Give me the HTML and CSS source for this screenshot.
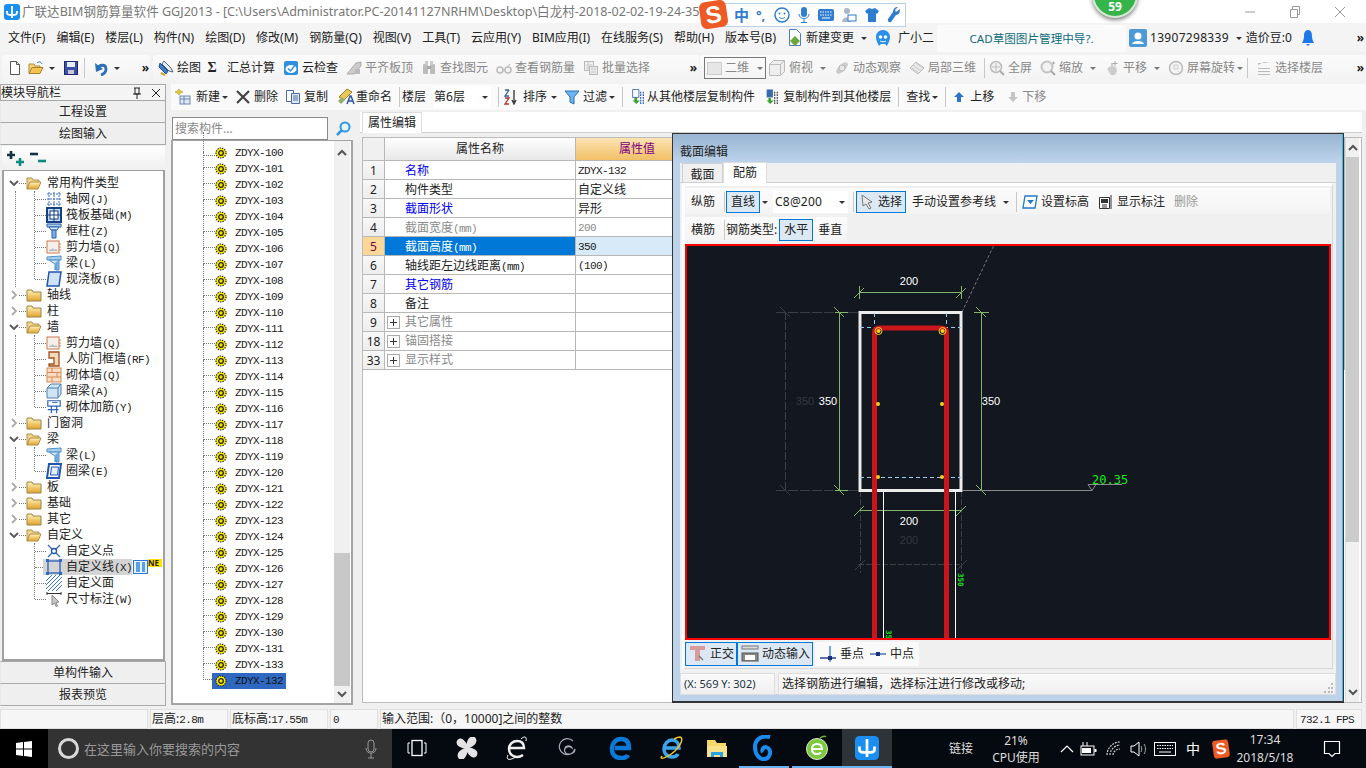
FILE: index.html
```html
<!DOCTYPE html>
<html lang="zh-CN">
<head>
<meta charset="utf-8">
<title>广联达BIM钢筋算量软件 GGJ2013</title>
<link rel="stylesheet" href="styles.css">
</head>
<body>
<svg class="sprite" xmlns="http://www.w3.org/2000/svg">
  <defs>
    <linearGradient id="gf" x1="0" y1="0" x2="0" y2="1"><stop offset="0" stop-color="#fff3b8"/><stop offset="1" stop-color="#e2a32c"/></linearGradient>
  </defs>
  <symbol id="new" viewBox="0 0 16 16"><path d="M3.5 1.5h6l3 3v10h-9z" fill="#fff" stroke="#555"/><path d="M9.5 1.5v3h3" fill="#ddd" stroke="#555"/></symbol>
  <symbol id="open" viewBox="0 0 16 16"><path d="M1 13V4h5l1 2h5v2" fill="#f5d67a" stroke="#b08a3a"/><path d="M1 13.5l3-6h11l-3 6z" fill="#f3c452" stroke="#a8802e"/><path d="M9 3c2-2 4-1 5 1" fill="none" stroke="#2a6fc0"/></symbol>
  <symbol id="save" viewBox="0 0 16 16"><rect x="1.5" y="1.5" width="13" height="13" fill="#3e4fa8" stroke="#1d2a70"/><rect x="4" y="2" width="8" height="5" fill="#e8eef8"/><rect x="5" y="10" width="6" height="4" fill="#c8c8d8"/></symbol>
  <symbol id="undo" viewBox="0 0 16 16"><path d="M5 9c1-5 8-5 8 0 0 3-2 5-5 6" fill="none" stroke="#2f6fb8" stroke-width="2.800"/><path d="M2 3l1 9 7-3z" fill="#2f6fb8"/></symbol>
  <symbol id="draw" viewBox="0 0 16 16"><path d="M2 3l8 8-2 3-7-7z" fill="#3a7fd0" stroke="#1f4f90"/><path d="M6 1l7 7 2 4-4-1-7-7z" fill="#e8eef6" stroke="#567"/><path d="M3 13l4 2" stroke="#d8a030" stroke-width="2"/></symbol>
  <symbol id="cloud" viewBox="0 0 16 16"><rect x="1" y="1" width="14" height="14" rx="2" fill="#2f8fe0"/><ellipse cx="8" cy="9" rx="5.500" ry="4" fill="#fff"/><path d="M5 8.500l2.500 2.500 4-5" fill="none" stroke="#2f8fe0" stroke-width="1.500"/></symbol>
  <symbol id="align" viewBox="0 0 16 16"><path d="M1 14l9-11 5-1v4L8 14z" fill="#ccc" stroke="#aaa"/><rect x="9" y="9" width="5" height="5" fill="#bbb"/></symbol>
  <symbol id="bino" viewBox="0 0 16 16"><rect x="2" y="4" width="5" height="10" rx="1" fill="#bbb"/><rect x="9" y="4" width="5" height="10" rx="1" fill="#bbb"/><rect x="4" y="1" width="3" height="4" fill="#ccc"/><rect x="9" y="1" width="3" height="4" fill="#ccc"/><rect x="6" y="6" width="4" height="3" fill="#aaa"/></symbol>
  <symbol id="view" viewBox="0 0 16 16"><circle cx="4" cy="10" r="3" fill="none" stroke="#bbb" stroke-width="1.500"/><circle cx="12" cy="10" r="3" fill="none" stroke="#bbb" stroke-width="1.500"/><path d="M7 10h2M12 7l2-3" stroke="#bbb"/></symbol>
  <symbol id="batch" viewBox="0 0 16 16"><rect x="1.500" y="1.500" width="9" height="9" fill="#eee" stroke="#bbb"/><path d="M3 5h6M3 8h6M5 2v8" stroke="#ccc"/><rect x="6.500" y="6.500" width="8" height="8" fill="#e8e8e8" stroke="#bbb"/><path d="M8 9h5M8 12h5" stroke="#ccc"/></symbol>
  <symbol id="cube" viewBox="0 0 18 18"><path d="M1.500 5.500l4-4h11v11l-4 4h-11z" fill="#eee" stroke="#bbb"/><path d="M1.500 5.500h11v11M12.500 5.500l4-4" fill="none" stroke="#bbb"/></symbol>
  <symbol id="orbit" viewBox="0 0 16 16"><ellipse cx="8" cy="8" rx="7.500" ry="3.500" transform="rotate(-45 8 8)" fill="#ccc"/><circle cx="8" cy="8" r="3" fill="#e8e8e8" stroke="#bbb"/></symbol>
  <symbol id="local" viewBox="0 0 16 16"><path d="M1 8l6-6 8 6-6 6z" fill="#e8e8e8" stroke="#bbb"/><path d="M4 5l8 6M7 3l7 5M3 8l7 5" stroke="#ccc"/></symbol>
  <symbol id="full" viewBox="0 0 16 16"><circle cx="7" cy="7" r="5.500" fill="#f2f2f2" stroke="#bbb" stroke-width="1.500"/><path d="M7 3v8M3 7h8" stroke="#bbb"/><path d="M11 11l4 4" stroke="#aaa" stroke-width="2"/></symbol>
  <symbol id="zoomi" viewBox="0 0 16 16"><circle cx="7" cy="7" r="5.500" fill="#f2f2f2" stroke="#c4c4c4" stroke-width="2"/><path d="M11 11l4 4" stroke="#aaa" stroke-width="2"/><path d="M12 3h3M13.500 1.500v3" stroke="#aaa"/></symbol>
  <symbol id="pan" viewBox="0 0 16 16"><path d="M3 9l3-3 1 1V3h2v3l3 1 1 4-2 4H7z" fill="#ccc"/><path d="M11 1v5M8.500 3.500h5" stroke="#aaa"/></symbol>
  <symbol id="rot" viewBox="0 0 16 16"><circle cx="8" cy="8" r="6.500" fill="#f4f4f4" stroke="#bbb" stroke-width="1.500"/><path d="M6 5h4v4H6zM10 11l3 3" stroke="#ccc" fill="none"/></symbol>
  <symbol id="floor" viewBox="0 0 16 16"><path d="M2 5l6-3 6 1H2zM2 8h12v1H2zM2 11h12v1H2zM2 14h12v1H2z" fill="#bbb"/></symbol>
  <symbol id="nw" viewBox="0 0 16 16"><rect x="5" y="7" width="10" height="8" fill="#dfe8f4" stroke="#6a88b0"/><path d="M5 10h10M9 7v8" stroke="#6a88b0"/><path d="M4 0c1 2 2 2 4 3-2 1-3 1-4 3-1-2-2-2-4-3 2-1 3-1 4-3z" fill="#e8c430" stroke="#a08010" stroke-width=".500"/></symbol>
  <symbol id="del" viewBox="0 0 16 16"><path d="M2 2l12 12M14 2L2 14" stroke="#444" stroke-width="2.200"/></symbol>
  <symbol id="copy" viewBox="0 0 16 16"><path d="M1.500 1.500h7v11h-7z" fill="#fff" stroke="#4a6c9c"/><path d="M6.500 4.500h8v10h-8z" fill="#dfe9f6" stroke="#4a6c9c"/><path d="M8 7h5M8 9h5M8 11h5" stroke="#4a6c9c"/></symbol>
  <symbol id="ren" viewBox="0 0 20 18"><path d="M4 9l8-8 5 3-8 8z" fill="#e9c75a" stroke="#a08020"/><path d="M3 13l4-4 3 3-4 4z" fill="#8cb070"/><path d="M12 16l3-8h1l3 8M13.500 13h4" fill="none" stroke="#2a55a8" stroke-width="1.500"/></symbol>
  <symbol id="sort" viewBox="0 0 16 16"><path d="M3 1h4M7 1L3 7h4" fill="none" stroke="#3360a8" stroke-width="1.300"/><path d="M3 9h4L3 15h4" fill="none" stroke="#b03030" stroke-width="1.300"/><path d="M12 1v12M10 11l2 4 2-4" fill="none" stroke="#333" stroke-width="1.300"/></symbol>
  <symbol id="filter" viewBox="0 0 16 16"><path d="M1 2h14l-5 6v7l-4-2V8z" fill="#6db4ee" stroke="#2a70b8"/></symbol>
  <symbol id="cpa" viewBox="0 0 16 18"><path d="M2 .5h7v9H2z" fill="#fff" stroke="#3a6bb0"/><path d="M11 3v14M14 3v14" stroke="#3a6bb0" stroke-dasharray="2 1" stroke-width="1.500"/><path d="M4 10h3v3h3l-4 4-4-4h2z" fill="#3aa030"/></symbol>
  <symbol id="cpb" viewBox="0 0 16 18"><path d="M2 .5h7v9H2z" fill="#3a6bb0"/><path d="M11 3v14M14 3v14" stroke="#555" stroke-dasharray="2 1" stroke-width="1.500"/><path d="M4 10h3v3h3l-4 4-4-4h2z" fill="#3aa030"/></symbol>
  <symbol id="up" viewBox="0 0 12 12"><path d="M6 1l5 5H8v5H4V6H1z" fill="#2f74c8"/></symbol>
  <symbol id="dn" viewBox="0 0 12 12"><path d="M6 11l5-5H8V1H4v5H1z" fill="#c4c4c4"/></symbol>
  <symbol id="fo" viewBox="0 0 16 14"><path d="M1 13V2h5l1 2h6v2" fill="#f0d488" stroke="#b09048"/><path d="M1 13l3-7h11l-3 7z" fill="url(#gf)" stroke="#b09048"/></symbol>
  <symbol id="fc" viewBox="0 0 16 14"><path d="M1 13V2h5l1 2h8v9z" fill="url(#gf)" stroke="#9a8448"/></symbol>
  <symbol id="grid" viewBox="0 0 16 16"><path d="M3 1v14M8 1v14M13 1v14M1 3h14M1 8h14M1 13h14" stroke="#3a68b8" stroke-dasharray="2 1"/></symbol>
  <symbol id="raft" viewBox="0 0 16 16"><rect x="1" y="1" width="14" height="14" fill="#c4dcf4" stroke="#173f80" stroke-width="2"/><rect x="4" y="4" width="8" height="8" fill="#fff" stroke="#173f80"/><path d="M8 1v14M1 8h14" stroke="#173f80"/></symbol>
  <symbol id="col" viewBox="0 0 16 16"><path d="M1 1h14v3H1z" fill="#a8cdf0" stroke="#2a5ea8"/><path d="M3 4h10l-2 3H5z" fill="#dcecfa" stroke="#2a5ea8"/><path d="M6 7h4v8H6z" fill="#7ab0e6" stroke="#2a5ea8"/></symbol>
  <symbol id="wall" viewBox="0 0 16 16"><rect x="1" y="2" width="12" height="12" fill="#f4f0ec" stroke="#d07a4a"/><path d="M4 10l1 1 2-2 1 2 2-1 2 2H3z" fill="#b8b8b8"/><path d="M13 5h2M13 8h2M13 11h2" stroke="#d07a4a"/></symbol>
  <symbol id="beam" viewBox="0 0 16 16"><path d="M1 2l14-1v4L1 5z" fill="#a8d0ee" stroke="#4e90c8"/><path d="M3 5h10L9 15V9z" fill="#d0e6f8" stroke="#4e90c8"/><path d="M10 7v8h3V5" fill="#7ab6e6" stroke="#4e90c8"/></symbol>
  <symbol id="slab" viewBox="0 0 16 16"><path d="M3 1h12l-2 14H1z" fill="#cfe2f8" stroke="#1f55b0" stroke-width="1.500"/></symbol>
  <symbol id="door" viewBox="0 0 16 16"><path d="M3 1h10v14H3v-2h5V7H3z" fill="#f4d8b8" stroke="#a05020" stroke-width="1.300"/></symbol>
  <symbol id="brick" viewBox="0 0 16 16"><rect x="1" y="1" width="14" height="14" fill="#f8dcc4" stroke="#d88850"/><path d="M1 5.500h14M1 10h14M6 1v4.500M11 5.500V10M6 10v5" stroke="#d88850"/></symbol>
  <symbol id="hide" viewBox="0 0 16 16"><path d="M1 5l4-4h10v10l-3 4H1z" fill="#cfe4f6" stroke="#4e7fb0"/><path d="M1 5h11v10M12 5l3-4" fill="none" stroke="#4e7fb0"/></symbol>
  <symbol id="reb" viewBox="0 0 18 16"><path d="M2 1h14v6H2zM6 7v8M12 7v8M2 11h12" fill="none" stroke="#2a62b8" stroke-width="1.300"/><path d="M7 3h6" stroke="#2a62b8"/></symbol>
  <symbol id="ring" viewBox="0 0 16 16"><path d="M3 1h12l-2 14H1z" fill="#fff" stroke="#1f55b0" stroke-width="2"/><path d="M5.500 4h7l-1 8h-7z" fill="#e4eefa" stroke="#1f55b0"/></symbol>
  <symbol id="cp" viewBox="0 0 16 16"><path d="M2 2l12 12M14 2L2 14" stroke="#3a68b8" stroke-width="1.300"/><circle cx="8" cy="8" r="2.500" fill="#fff" stroke="#1f55b0" stroke-width="1.300"/></symbol>
  <symbol id="cl" viewBox="0 0 16 16"><rect x="2" y="2" width="12" height="12" fill="none" stroke="#1f55b0" stroke-width="1.200"/><path d="M0 0h3v3H0zM13 0h3v3h-3zM0 13h3v3H0zM13 13h3v3h-3z" fill="#2a6ac8"/></symbol>
  <symbol id="cf" viewBox="0 0 16 16"><path d="M0 6L6 0M0 10L10 0M0 14L14 0M2 16L16 2M6 16L16 6M10 16l6-6" stroke="#3a78c8"/></symbol>
  <symbol id="dim" viewBox="0 0 16 16"><path d="M1 1v3M15 1v3M1 2.500h14" stroke="#333" fill="none"/><path d="M6 4l7 7-3 .5 1.500 3.500-1.500 .5-1.500-3.500L6 14z" fill="#c8c8c8" stroke="#888"/></symbol>
  <symbol id="gear" viewBox="0 0 12 12"><circle cx="6" cy="6" r="5" fill="#f6e600" stroke="#222" stroke-width="1.200" stroke-dasharray="1.300 1.100"/><circle cx="6" cy="6" r="2.300" fill="#f6e600" stroke="#222" stroke-width="1.300"/></symbol>
  <symbol id="chr" viewBox="0 0 10 10"><path d="M3 1l4 4-4 4" fill="none" stroke="#aaa" stroke-width="1.800"/></symbol>
  <symbol id="chd" viewBox="0 0 10 10"><path d="M1 3l4 4 4-4" fill="none" stroke="#555" stroke-width="1.800"/></symbol>
  <symbol id="sel" viewBox="0 0 16 16"><path d="M3 1l1 11 3-2 3 5 2-1-3-5 4-1z" fill="#e8e8e8" stroke="#777"/></symbol>
  <symbol id="lvl" viewBox="0 0 16 16"><path d="M3 2h12l-2 12H1z" fill="#fff" stroke="#1f78c8" stroke-width="1.300"/><path d="M5 6h7l-3.500 4z" fill="#1f78c8"/></symbol>
  <symbol id="show" viewBox="0 0 16 16"><path d="M1.500 3.500h10v11h-10z" fill="#fff" stroke="#333"/><path d="M3 5h7v4H3z" fill="#333"/><path d="M13 1v14" stroke="#333"/><path d="M4 11h5M4 13h5" stroke="#333"/></symbol>
  <symbol id="ortho" viewBox="0 0 18 18"><path d="M1 1h15v4H11v11H6V5H1z" fill="#d89a9a"/><path d="M10 11l4 4" stroke="#777" stroke-width="1.500"/></symbol>
  <symbol id="dyn" viewBox="0 0 18 18"><rect x="1" y="1" width="16" height="3" fill="#ddd" stroke="#777"/><rect x="1" y="8" width="16" height="8" fill="#888" stroke="#555"/><rect x="4" y="10" width="10" height="5" fill="#fff"/></symbol>
  <symbol id="per" viewBox="0 0 18 18"><path d="M11 1v16" stroke="#4a88d8" stroke-width="1.500"/><path d="M1 13h16" stroke="#26408e" stroke-width="1.500"/><rect x="9" y="11" width="4" height="4" fill="#1a2f80"/></symbol>
  <symbol id="mid" viewBox="0 0 18 18"><path d="M1 9h16" stroke="#4a70b8" stroke-width="1.500"/><rect x="7" y="7" width="4" height="4" fill="#1a2f80"/></symbol>
  <symbol id="usr" viewBox="0 0 18 18"><rect width="18" height="18" rx="2" fill="#4a9ad8"/><circle cx="9" cy="7" r="3.500" fill="#fff"/><path d="M3 15c1-4 11-4 12 0z" fill="#fff"/></symbol>
  <symbol id="bell" viewBox="0 0 14 18"><path d="M7 1c3 0 4 3 4 6s1 5 2 7H1c1-2 2-4 2-7s1-6 4-6z" fill="#1f78e8"/><path d="M5 15h4l-2 2z" fill="#1f78e8"/></symbol>
  <symbol id="doc" viewBox="0 0 16 18"><path d="M2.500 .5h7l4 4v12h-11z" fill="#fff" stroke="#4a7ec0"/><path d="M8 7l5 5-5 5-5-5z" fill="#6ca83a"/></symbol>
  <symbol id="xiao" viewBox="0 0 18 18"><path d="M9 1c4 0 7 3 7 7 0 4-2 6-3 9l-2-2H7l-2 2C4 14 2 12 2 8c0-4 3-7 7-7z" fill="#2a8fe8"/><circle cx="6.500" cy="8" r="1.800" fill="#fff"/><circle cx="11.500" cy="8" r="1.800" fill="#fff"/><path d="M6 12c2 1 4 1 6 0" stroke="#fff" fill="none"/></symbol>
  <symbol id="app" viewBox="0 0 16 16"><rect width="16" height="16" rx="3" fill="#1b8ef2"/><path d="M8 2v12M3 7v2c0 2 2 2 5 2s5 0 5-2V7" fill="none" stroke="#fff" stroke-width="1.800"/></symbol>
  <symbol id="mag" viewBox="0 0 16 16"><circle cx="10" cy="6" r="4.500" fill="#eaf4fc" stroke="#2e9ae6" stroke-width="2"/><path d="M6.500 9.500L2 14" stroke="#2e9ae6" stroke-width="2.500"/></symbol>
</svg>

<div class="app">
  <header class="titlebar">
    <svg class="ic16"><use href="#app"/></svg>
    <span class="title">广联达BIM钢筋算量软件 GGJ2013 - [C:\Users\Administrator.PC-20141127NRHM\Desktop\白龙村-2018-02-02-19-24-35</span>
    <div class="winctl">
      <svg width="14" height="14" viewBox="0 0 14 14"><path d="M2 7h10" stroke="#999"/></svg>
      <svg width="14" height="14" viewBox="0 0 14 14"><path d="M2.500 4.500h7v8h-7zM4.500 4.500v-3h7v8h-2" fill="none" stroke="#999"/></svg>
      <svg width="14" height="14" viewBox="0 0 14 14"><path d="M2 2l10 10M12 2L2 12" stroke="#999"/></svg>
    </div>
  </header>

  <nav class="menubar">
    <span>文件(F)</span><span>编辑(E)</span><span>楼层(L)</span><span>构件(N)</span><span>绘图(D)</span><span>修改(M)</span><span>钢筋量(Q)</span><span>视图(V)</span><span>工具(T)</span><span>云应用(Y)</span><span>BIM应用(I)</span><span>在线服务(S)</span><span>帮助(H)</span><span>版本号(B)</span>
    <span class="it"><svg class="ic16 h18"><use href="#doc"/></svg>新建变更<i class="caret c-wide"></i></span>
    <span class="it xiaoit"><svg class="ic18"><use href="#xiao"/></svg>广小二</span>
    <span class="cadbox">CAD草图图片管理中导?.</span>
    <span class="it user"><svg class="ic18"><use href="#usr"/></svg><span class="phone">13907298339</span><i class="caret c-wide"></i></span>
    <span class="it bean">造价豆:0<svg class="bellic"><use href="#bell"/></svg></span>
    <span class="more">»</span>
  </nav>

  <div class="toolbar">
    <div class="band b1">
      <svg class="ic16"><use href="#new"/></svg>
      <span class="it"><svg class="ic16"><use href="#open"/></svg><i class="caret c-mid"></i></span>
      <svg class="ic16 savemar"><use href="#save"/></svg>
      <i class="sep"></i>
      <span class="it undoit"><svg class="ic16"><use href="#undo"/></svg><i class="caret c-mid"></i></span>
      <span class="more pushr">»</span>
    </div>
    <div class="band b2">
      <span class="it"><svg class="ic16"><use href="#draw"/></svg>绘图</span>
      <span class="it"><b class="sigma">Σ</b>汇总计算</span>
      <span class="it"><svg class="ic16"><use href="#cloud"/></svg>云检查</span>
      <span class="it off"><svg class="ic16"><use href="#align"/></svg>平齐板顶</span>
      <span class="it off"><svg class="ic16"><use href="#bino"/></svg>查找图元</span>
      <span class="it off"><svg class="ic16"><use href="#view"/></svg>查看钢筋量</span>
      <span class="it off"><svg class="ic16"><use href="#batch"/></svg>批量选择</span>
      <span class="more pushr">»</span>
    </div>
    <div class="band b3 off">
      <span class="it twod"><i class="swatch"></i>二维<i class="caret"></i></span>
      <span class="it cubeit"><svg class="ic18"><use href="#cube"/></svg>俯视<i class="caret c-wide"></i></span>
      <span class="it"><svg class="ic16"><use href="#orbit"/></svg>动态观察</span>
      <span class="it"><svg class="ic16"><use href="#local"/></svg>局部三维</span>
      <i class="sep sepa"></i>
      <span class="it"><svg class="ic16"><use href="#full"/></svg>全屏</span>
      <span class="it"><svg class="ic16"><use href="#zoomi"/></svg>缩放<i class="caret c-wide"></i></span>
      <span class="it"><svg class="ic16"><use href="#pan"/></svg>平移<i class="caret c-wide"></i></span>
      <span class="it"><svg class="ic16"><use href="#rot"/></svg>屏幕旋转<i class="caret"></i></span>
      <i class="sep sepb"></i>
      <span class="it"><svg class="ic16"><use href="#floor"/></svg>选择楼层</span>
      <span class="more pushr dark">»</span>
    </div>
  </div>

  <div class="workspace">
    <aside class="nav">
      <div class="navhead"><span>模块导航栏</span><span class="navbtns"><svg width="10" height="12" viewBox="0 0 10 12"><path d="M2 1h6M3 1v6h4V1M1 7h8M5 7v5" fill="none" stroke="#222"/></svg><svg width="10" height="10" viewBox="0 0 10 10"><path d="M1 1l8 8M9 1L1 9" stroke="#222"/></svg></span></div>
      <div class="navbtn">工程设置</div>
      <div class="navbtn">绘图输入</div>
      <div class="treebar">
        <svg width="18" height="16" viewBox="0 0 18 16"><path d="M0 4h8M4 0v8" stroke="#134" stroke-width="2.600"/><path d="M9 11h8M13 7v8" stroke="#0a8a80" stroke-width="2.600"/></svg>
        <svg width="18" height="16" viewBox="0 0 18 16"><path d="M0 3h8" stroke="#134" stroke-width="2.600"/><path d="M8 10h8" stroke="#0a8a80" stroke-width="2.600"/></svg>
      </div>
      <div class="ntree">
        <div class="nr"><svg class="chev"><use href="#chd"/></svg><i class="dot"></i><svg class="fold"><use href="#fo"/></svg><span>常用构件类型</span></div>
        <div class="kids"><div class="kidsin">
          <div class="cr"><i class="dot2"></i><svg class="ic16"><use href="#grid"/></svg><span>轴网<em class="lat">(J)</em></span></div>
          <div class="cr"><i class="dot2"></i><svg class="ic16"><use href="#raft"/></svg><span>筏板基础<em class="lat">(M)</em></span></div>
          <div class="cr"><i class="dot2"></i><svg class="ic16"><use href="#col"/></svg><span>框柱<em class="lat">(Z)</em></span></div>
          <div class="cr"><i class="dot2"></i><svg class="ic16"><use href="#wall"/></svg><span>剪力墙<em class="lat">(Q)</em></span></div>
          <div class="cr"><i class="dot2"></i><svg class="ic16"><use href="#beam"/></svg><span>梁<em class="lat">(L)</em></span></div>
          <div class="cr"><i class="dot2"></i><svg class="ic16"><use href="#slab"/></svg><span>现浇板<em class="lat">(B)</em></span></div>
        </div></div>
        <div class="nr"><svg class="chev"><use href="#chr"/></svg><i class="dot"></i><svg class="fold"><use href="#fc"/></svg><span>轴线</span></div>
        <div class="nr"><svg class="chev"><use href="#chr"/></svg><i class="dot"></i><svg class="fold"><use href="#fc"/></svg><span>柱</span></div>
        <div class="nr"><svg class="chev"><use href="#chd"/></svg><i class="dot"></i><svg class="fold"><use href="#fo"/></svg><span>墙</span></div>
        <div class="kids"><div class="kidsin">
          <div class="cr"><i class="dot2"></i><svg class="ic16"><use href="#wall"/></svg><span>剪力墙<em class="lat">(Q)</em></span></div>
          <div class="cr"><i class="dot2"></i><svg class="ic16"><use href="#door"/></svg><span>人防门框墙<em class="lat">(RF)</em></span></div>
          <div class="cr"><i class="dot2"></i><svg class="ic16"><use href="#brick"/></svg><span>砌体墙<em class="lat">(Q)</em></span></div>
          <div class="cr"><i class="dot2"></i><svg class="ic16"><use href="#hide"/></svg><span>暗梁<em class="lat">(A)</em></span></div>
          <div class="cr"><i class="dot2"></i><svg class="ic16"><use href="#reb"/></svg><span>砌体加筋<em class="lat">(Y)</em></span></div>
        </div></div>
        <div class="nr"><svg class="chev"><use href="#chr"/></svg><i class="dot"></i><svg class="fold"><use href="#fc"/></svg><span>门窗洞</span></div>
        <div class="nr"><svg class="chev"><use href="#chd"/></svg><i class="dot"></i><svg class="fold"><use href="#fo"/></svg><span>梁</span></div>
        <div class="kids"><div class="kidsin">
          <div class="cr"><i class="dot2"></i><svg class="ic16"><use href="#beam"/></svg><span>梁<em class="lat">(L)</em></span></div>
          <div class="cr"><i class="dot2"></i><svg class="ic16"><use href="#ring"/></svg><span>圈梁<em class="lat">(E)</em></span></div>
        </div></div>
        <div class="nr"><svg class="chev"><use href="#chr"/></svg><i class="dot"></i><svg class="fold"><use href="#fc"/></svg><span>板</span></div>
        <div class="nr"><svg class="chev"><use href="#chr"/></svg><i class="dot"></i><svg class="fold"><use href="#fc"/></svg><span>基础</span></div>
        <div class="nr"><svg class="chev"><use href="#chr"/></svg><i class="dot"></i><svg class="fold"><use href="#fc"/></svg><span>其它</span></div>
        <div class="nr"><svg class="chev"><use href="#chd"/></svg><i class="dot"></i><svg class="fold"><use href="#fo"/></svg><span>自定义</span></div>
        <div class="kids nov"><div class="kidsin">
          <div class="cr"><i class="dot2"></i><svg class="ic16"><use href="#cp"/></svg><span>自定义点</span></div>
          <div class="cr"><i class="dot2 short"></i><span class="selwrap"><svg class="ic16"><use href="#cl"/></svg><span>自定义线<em class="lat">(X)</em></span></span><span class="tag"><i></i><i></i></span><b class="ne">NE</b></div>
          <div class="cr"><i class="dot2"></i><svg class="ic16"><use href="#cf"/></svg><span>自定义面</span></div>
          <div class="cr"><i class="dot2"></i><svg class="ic16"><use href="#dim"/></svg><span>尺寸标注<em class="lat">(W)</em></span></div>
        </div></div>
      </div>
      <div class="navbtn gapt">单构件输入</div>
      <div class="navbtn">报表预览</div>
    </aside>

    <div class="rest">
      <div class="toolbar2">
        <span class="it wide firstit"><svg class="ic16"><use href="#nw"/></svg>新建<i class="caret"></i></span>
        <span class="it"><svg class="ic16"><use href="#del"/></svg>删除</span>
        <span class="it"><svg class="ic16"><use href="#copy"/></svg>复制</span>
        <span class="it tight"><svg class="ic20"><use href="#ren"/></svg>重命名</span>
        <i class="sep sep5"></i>
        <span>楼层</span>
        <span class="floorcb">第6层<i class="caret"></i></span>
        <i class="sep sepa"></i>
        <span class="it wide"><svg class="ic16"><use href="#sort"/></svg>排序<i class="caret"></i></span>
        <span class="it"><svg class="ic16"><use href="#filter"/></svg>过滤<i class="caret"></i></span>
        <i class="sep"></i>
        <span class="it tight"><svg class="ic16"><use href="#cpa"/></svg>从其他楼层复制构件</span>
        <span class="it cpb"><svg class="ic16"><use href="#cpb"/></svg>复制构件到其他楼层</span>
        <i class="sep"></i>
        <span class="it">查找<i class="caret"></i></span>
        <i class="sep"></i>
        <span class="it wide"><svg class="ic12"><use href="#up"/></svg>上移</span>
        <span class="it off dnit"><svg class="ic12"><use href="#dn"/></svg>下移</span>
      </div>
      <div class="lower">
        <section class="comp">
          <div class="searchrow">
            <div class="searchbox">搜索构件...</div>
            <svg class="ic16"><use href="#mag"/></svg>
          </div>
          <div class="clist">
            <div class="rows">
              <div class="zr"><i class="dot3"></i><svg class="ic12"><use href="#gear"/></svg><span class="zt">ZDYX-100</span></div>
              <div class="zr"><i class="dot3"></i><svg class="ic12"><use href="#gear"/></svg><span class="zt">ZDYX-101</span></div>
              <div class="zr"><i class="dot3"></i><svg class="ic12"><use href="#gear"/></svg><span class="zt">ZDYX-102</span></div>
              <div class="zr"><i class="dot3"></i><svg class="ic12"><use href="#gear"/></svg><span class="zt">ZDYX-103</span></div>
              <div class="zr"><i class="dot3"></i><svg class="ic12"><use href="#gear"/></svg><span class="zt">ZDYX-104</span></div>
              <div class="zr"><i class="dot3"></i><svg class="ic12"><use href="#gear"/></svg><span class="zt">ZDYX-105</span></div>
              <div class="zr"><i class="dot3"></i><svg class="ic12"><use href="#gear"/></svg><span class="zt">ZDYX-106</span></div>
              <div class="zr"><i class="dot3"></i><svg class="ic12"><use href="#gear"/></svg><span class="zt">ZDYX-107</span></div>
              <div class="zr"><i class="dot3"></i><svg class="ic12"><use href="#gear"/></svg><span class="zt">ZDYX-108</span></div>
              <div class="zr"><i class="dot3"></i><svg class="ic12"><use href="#gear"/></svg><span class="zt">ZDYX-109</span></div>
              <div class="zr"><i class="dot3"></i><svg class="ic12"><use href="#gear"/></svg><span class="zt">ZDYX-110</span></div>
              <div class="zr"><i class="dot3"></i><svg class="ic12"><use href="#gear"/></svg><span class="zt">ZDYX-111</span></div>
              <div class="zr"><i class="dot3"></i><svg class="ic12"><use href="#gear"/></svg><span class="zt">ZDYX-112</span></div>
              <div class="zr"><i class="dot3"></i><svg class="ic12"><use href="#gear"/></svg><span class="zt">ZDYX-113</span></div>
              <div class="zr"><i class="dot3"></i><svg class="ic12"><use href="#gear"/></svg><span class="zt">ZDYX-114</span></div>
              <div class="zr"><i class="dot3"></i><svg class="ic12"><use href="#gear"/></svg><span class="zt">ZDYX-115</span></div>
              <div class="zr"><i class="dot3"></i><svg class="ic12"><use href="#gear"/></svg><span class="zt">ZDYX-116</span></div>
              <div class="zr"><i class="dot3"></i><svg class="ic12"><use href="#gear"/></svg><span class="zt">ZDYX-117</span></div>
              <div class="zr"><i class="dot3"></i><svg class="ic12"><use href="#gear"/></svg><span class="zt">ZDYX-118</span></div>
              <div class="zr"><i class="dot3"></i><svg class="ic12"><use href="#gear"/></svg><span class="zt">ZDYX-119</span></div>
              <div class="zr"><i class="dot3"></i><svg class="ic12"><use href="#gear"/></svg><span class="zt">ZDYX-120</span></div>
              <div class="zr"><i class="dot3"></i><svg class="ic12"><use href="#gear"/></svg><span class="zt">ZDYX-121</span></div>
              <div class="zr"><i class="dot3"></i><svg class="ic12"><use href="#gear"/></svg><span class="zt">ZDYX-122</span></div>
              <div class="zr"><i class="dot3"></i><svg class="ic12"><use href="#gear"/></svg><span class="zt">ZDYX-123</span></div>
              <div class="zr"><i class="dot3"></i><svg class="ic12"><use href="#gear"/></svg><span class="zt">ZDYX-124</span></div>
              <div class="zr"><i class="dot3"></i><svg class="ic12"><use href="#gear"/></svg><span class="zt">ZDYX-125</span></div>
              <div class="zr"><i class="dot3"></i><svg class="ic12"><use href="#gear"/></svg><span class="zt">ZDYX-126</span></div>
              <div class="zr"><i class="dot3"></i><svg class="ic12"><use href="#gear"/></svg><span class="zt">ZDYX-127</span></div>
              <div class="zr"><i class="dot3"></i><svg class="ic12"><use href="#gear"/></svg><span class="zt">ZDYX-128</span></div>
              <div class="zr"><i class="dot3"></i><svg class="ic12"><use href="#gear"/></svg><span class="zt">ZDYX-129</span></div>
              <div class="zr"><i class="dot3"></i><svg class="ic12"><use href="#gear"/></svg><span class="zt">ZDYX-130</span></div>
              <div class="zr"><i class="dot3"></i><svg class="ic12"><use href="#gear"/></svg><span class="zt">ZDYX-131</span></div>
              <div class="zr"><i class="dot3"></i><svg class="ic12"><use href="#gear"/></svg><span class="zt">ZDYX-133</span></div>
              <div class="zr cur"><i class="dot3 short last"></i><span class="curbox"><svg class="ic12"><use href="#gear"/></svg><span class="zt">ZDYX-132</span></span></div>
            </div>
            <div class="sbar">
              <svg class="sarrow" viewBox="0 0 10 10"><path d="M1 7l4-4 4 4" fill="none" stroke="#555" stroke-width="2"/></svg>
              <div class="sthumb"></div>
              <svg class="sarrow" viewBox="0 0 10 10"><path d="M1 3l4 4 4-4" fill="none" stroke="#555" stroke-width="2"/></svg>
            </div>
          </div>
        </section>

        <section class="propwrap">
          <div class="tabs"><span class="tab">属性编辑</span></div>
          <div class="proppanel">
            <div class="pgrid">
              <div class="h corner"></div><div class="h">属性名称</div><div class="h hv">属性值</div>
              <div class="n">1</div><div class="nm blue">名称</div><div class="v mono">ZDYX-132</div>
              <div class="n">2</div><div class="nm">构件类型</div><div class="v">自定义线</div>
              <div class="n">3</div><div class="nm blue">截面形状</div><div class="v">异形</div>
              <div class="n">4</div><div class="nm gray">截面宽度<em class="lat">(mm)</em></div><div class="v gray mono">200</div>
              <div class="n nsel">5</div><div class="nm msel">截面高度<em class="lat">(mm)</em></div><div class="v vsel mono">350</div>
              <div class="n">6</div><div class="nm">轴线距左边线距离<em class="lat">(mm)</em></div><div class="v mono">(100)</div>
              <div class="n">7</div><div class="nm blue">其它钢筋</div><div class="v"></div>
              <div class="n">8</div><div class="nm">备注</div><div class="v"></div>
              <div class="n">9</div><div class="nm gray grp"><i class="pm"></i>其它属性</div><div class="v"></div>
              <div class="n">18</div><div class="nm gray grp"><i class="pm"></i>锚固搭接</div><div class="v"></div>
              <div class="n">33</div><div class="nm gray grp"><i class="pm"></i>显示样式</div><div class="v"></div>
            </div>
            <div class="psbar">
              <svg class="sarrow" viewBox="0 0 10 10"><path d="M1 7l4-4 4 4" fill="none" stroke="#555" stroke-width="2"/></svg>
              <div class="pthumb"></div>
              <svg class="sarrow" viewBox="0 0 10 10"><path d="M1 3l4 4 4-4" fill="none" stroke="#555" stroke-width="2"/></svg>
            </div>
          </div>
        </section>
      </div>
    </div>
  </div>

  <footer class="status">
    <span class="s0"></span><span class="s1">层高:<em>2.8m</em></span><span class="s2">底标高:<em>17.55m</em></span><span class="s3"><em>0</em></span><span class="s4">输入范围:（0，10000]之间的整数</span><span class="s5"><em>732.1 FPS</em></span>
  </footer>

  <div class="taskbar">
    <div class="start"><svg width="18" height="18" viewBox="0 0 18 18"><path d="M1 3l7-1v6.500H1zM9 2l8-1v7.500H9zM1 9.500h7V16l-7-1zM9 9.500h8V17l-8-1z" fill="#fff"/></svg></div>
    <div class="search"><i class="cortana"></i><span>在这里输入你要搜索的内容</span><svg class="mic" width="14" height="20" viewBox="0 0 14 20"><rect x="4" y="1" width="6" height="12" rx="3" fill="none" stroke="#999"/><path d="M2 9c0 7 10 7 10 0M7 15v4M4 19h6" fill="none" stroke="#999"/></svg></div>
    <div class="slot"><svg width="20" height="18" viewBox="0 0 20 18"><rect x="5" y="1.500" width="10" height="15" fill="none" stroke="#fff" stroke-width="1.300"/><path d="M3 4H1v10h2M17 4h2v10h-2" fill="none" stroke="#fff"/></svg></div>
    <div class="slot"><svg width="22" height="22" viewBox="0 0 22 22"><path d="M11 10C9 4 4 0 2 4s3 6 9 7c-5 2-10 5-8 9s7 1 8-8c2 6 7 10 9 6s-3-6-9-7c5-2 10-5 8-9s-7-1-8 8z" fill="#e4e4e4" stroke="#e4e4e4" stroke-width="2"/></svg></div>
    <div class="slot"><svg width="24" height="26" viewBox="0 0 24 26"><path d="M5 13h14c0-5-3-7-7-7s-8 3-8 8 4 8 8 8c2 0 4-.5 6-2" fill="none" stroke="#eee" stroke-width="2.500"/><path d="M3 20C0 26 6 25 11 22M16 4c3-3 6-3 5 2" fill="none" stroke="#fff"/></svg></div>
    <div class="slot"><svg width="20" height="20" viewBox="0 0 20 20"><path d="M16 3a8 8 0 1 0 2 8c0 5-8 7-10 3s3-7 7-4c-1-3-6-3-7 0" fill="none" stroke="#aab" stroke-width="1.200"/></svg></div>
    <div class="slot shift5"><svg width="24" height="24" viewBox="0 0 24 24"><path d="M6 12h14c0-6-3-9-8-9S3 7 3 13s4 9 9 9c3 0 6-1 7-3" fill="none" stroke="#0c78d8" stroke-width="4.500"/></svg></div>
    <div class="slot shift5"><svg width="26" height="26" viewBox="0 0 26 26"><path d="M7 13h14c0-5-3-8-7-8s-8 4-8 9 4 8 8 8c2 0 5-1 6-3" fill="none" stroke="#3aa6f0" stroke-width="3.500"/><path d="M4 21C0 26 11 22 17 16S26 3 22 2c-2 0-4 1-6 2" fill="none" stroke="#f0c020" stroke-width="1.500"/></svg></div>
    <div class="slot"><svg width="22" height="22" viewBox="0 0 22 22"><path d="M1 3h8l2 3h9v4H1z" fill="#f6d86a"/><path d="M1 9h20v11H1z" fill="#f9e28c"/><path d="M5 20v-5h12v5h-3v-2H8v2z" fill="#2fa2e6"/></svg></div>
    <div class="slot under"><svg width="24" height="26" viewBox="0 0 24 26"><path d="M18 2C10 0 3 4 3 12s5 13 10 12 7-8 3-11-7 2-5 4" fill="none" stroke="#1a8cf0" stroke-width="4"/></svg></div>
    <div class="slot under2"><svg width="26" height="26" viewBox="0 0 26 26"><circle cx="13" cy="14" r="10.500" fill="#7cc83e" stroke="#dfe8d0"/><path d="M8 14h10c0-3-2-5-5-5s-5 2-5 5 2 5 5 5c2 0 3-.5 4-1.500" fill="none" stroke="#fff" stroke-width="2"/><path d="M16 3c3-2 5-2 6-1" fill="none" stroke="#6ca83a" stroke-width="1.500"/></svg></div>
    <div class="slot active"><svg width="24" height="24"><use href="#app"/></svg></div>
    <div class="tray">
      <span class="t-link">链接</span>
      <span class="t-cpu"><b>21%</b><b>CPU使用</b></span>
      <span class="t-a w16"><svg width="14" height="8" viewBox="0 0 14 8"><path d="M1 7l6-6 6 6" fill="none" stroke="#fff" stroke-width="1.200"/></svg></span>
      <span class="t-a w26"><svg width="18" height="16" viewBox="0 0 18 16"><rect x="2" y="5" width="13" height="9" fill="none" stroke="#fff"/><rect x="3" y="7" width="9" height="5" fill="#fff"/><path d="M4 1v4M8 1v4" stroke="#fff"/><rect x="15.500" y="8" width="2" height="3" fill="#fff"/></svg></span>
      <span class="t-a w26"><svg width="16" height="16" viewBox="0 0 16 16"><path d="M1 14C1 7 7 1 14 1M4 14C4 9 9 4 14 4M7 14c0-3 3-6 7-6" fill="none" stroke="#ccc" stroke-dasharray="2 1" stroke-width="1.200"/></svg></span>
      <span class="t-a w24"><svg width="18" height="16" viewBox="0 0 18 16"><path d="M1 5h3l5-4v14l-5-4H1z" fill="none" stroke="#fff"/><path d="M11 5c1 2 1 4 0 6M14 3c2 3 2 7 0 10" fill="none" stroke="#aaa"/></svg></span>
      <span class="t-a w28"><svg width="22" height="14" viewBox="0 0 22 14"><rect x=".5" y=".5" width="21" height="13" fill="none" stroke="#fff"/><path d="M3 3.500h16M3 6.500h16" stroke="#fff" stroke-dasharray="1.500 1"/><path d="M5 10h12" stroke="#fff"/></svg></span>
      <span class="t-a w28 zh">中</span>
      <span class="t-a w28"><b class="sg small">S</b></span>
      <span class="t-clock"><b>17:34</b><b>2018/5/18</b></span>
      <span class="t-a notif"><svg width="18" height="18" viewBox="0 0 18 18"><path d="M1.500 1.500h15v12H12l-3 3-3-3H1.500z" fill="none" stroke="#fff" stroke-width="1.200"/></svg></span>
    </div>
  </div>
</div>

<!-- overlays -->
<div class="sogou">
  <b class="sg">S</b>
  <div class="sgbar">
    <span class="sgzh">中</span>
    <span class="sgp">°,</span>
    <svg width="16" height="16" viewBox="0 0 16 16"><circle cx="8" cy="8" r="7" fill="#fff" stroke="#2f7dd0" stroke-width="1.500"/><circle cx="5.500" cy="6.500" r="1" fill="#2f7dd0"/><circle cx="10.500" cy="6.500" r="1" fill="#2f7dd0"/><path d="M5 10c2 2 4 2 6 0" stroke="#2f7dd0" fill="none"/></svg>
    <svg width="14" height="16" viewBox="0 0 14 16"><rect x="4" y="0" width="6" height="10" rx="3" fill="#2f7dd0"/><path d="M2 7c0 6 10 6 10 0M7 12v3M4 15.500h6" fill="none" stroke="#2f7dd0"/></svg>
    <svg width="16" height="14" viewBox="0 0 16 14"><rect x="0" y="1" width="16" height="12" rx="2" fill="#2f7dd0"/><path d="M2 4h12M2 7h12" stroke="#fff" stroke-dasharray="1.500 1"/><path d="M4 10h8" stroke="#fff"/></svg>
    <svg width="16" height="16" viewBox="0 0 16 16"><circle cx="6" cy="4" r="3" fill="#aab8c8"/><path d="M1 15c0-6 9-6 9 0z" fill="#aab8c8"/><rect x="7" y="8" width="8" height="6" fill="#fff" stroke="#2f7dd0"/></svg>
    <svg width="16" height="16" viewBox="0 0 16 16"><path d="M5 1l3 1 3-1 4 3-2 3-1-1v9H4V6L3 7 1 4z" fill="#2f7dd0"/></svg>
    <svg width="14" height="16" viewBox="0 0 14 16"><path d="M13 2L9 5 8 3l3-3C8 0 6 2 6 5L1 12c-1 2 1 4 3 3l5-7c3 0 4-3 4-6z" fill="#2f7dd0"/></svg>
  </div>
</div>
<div class="badge">59</div>

<div class="dialog">
  <div class="dtitle">截面编辑</div>
  <div class="dbody">
    <div class="dtabs"><span class="dt off2">截面</span><span class="dt on">配筋</span></div>
    <div class="dpanel">
      <div class="dbar1">
        <span>纵筋</span><i class="sep s-a"></i>
        <span class="tog">直线</span><i class="caret"></i>
        <span class="dcb">C8@200<i class="caret"></i></span>
        <i class="sep s-b"></i>
        <span class="tog it selbtn"><svg class="ic16"><use href="#sel"/></svg>选择</span>
        <span class="it m3">手动设置参考线<i class="caret c-wide"></i></span>
        <i class="sep s-c"></i>
        <span class="it"><svg class="ic16"><use href="#lvl"/></svg>设置标高</span>
        <span class="it m6"><svg class="ic16"><use href="#show"/></svg>显示标注</span>
        <span class="dis">删除</span>
      </div>
      <div class="dbar2">
        <span>横筋</span><i class="sep"></i><span>钢筋类型:</span><span class="tog">水平</span><span class="m3">垂直</span>
      </div>
      <div class="canvas">
        <svg class="cad" viewBox="687 246 642 392" xmlns="http://www.w3.org/2000/svg">
          <g stroke="#3a3e46" stroke-width="1" fill="none">
            <path d="M776 312.500H858M776 490.500H858" stroke-dasharray="10 2"/>
            <path d="M785.500 312V491" stroke-dasharray="8 2"/>
            <path d="M780 307l10 10M780 485l10 10"/>
            <path d="M860.500 491V573M961.500 491V573M858 564.500H963" stroke-dasharray="6 2"/>
            <path d="M855 570l10-10M957 570l10-10"/>
          </g>
          <path d="M962 312L994 245" stroke="#777" stroke-dasharray="3 2" fill="none"/>
          <text x="805" y="405" class="dimt">350</text>
          <text x="909" y="544" class="dimt">200</text>
          <g stroke="#82b46a" stroke-width="1" fill="none">
            <path d="M859 292.500H962M859.500 286V299M961.500 286V299M854 298l10-10M956 298l10-10"/>
            <path d="M839.500 312V490.500M835 312.500h13M835 490.500h13M834 307l10 10M834 485l10 10"/>
            <path d="M981.500 312V490.500M974 312.500h15M974 490.500h2M976 307l10 10M976 485l10 10"/>
            <path d="M860 510.500H961M854 516l10-10M956 516l10-10"/>
          </g>
          <text x="909" y="285" class="whitet">200</text>
          <text x="828" y="405" class="whitet">350</text>
          <text x="991" y="405" class="whitet">350</text>
          <text x="909" y="525" class="whitet">200</text>
          <path d="M883.500 491V639M955.500 491V639" stroke="#fff" fill="none"/>
          <rect x="860" y="312.500" width="101" height="178" fill="none" stroke="#ececec" stroke-width="3"/>
          <path d="M860 327.500H961M860 477.500H961M874.500 313V327M946.500 313V327" stroke="#9fcaf0" stroke-dasharray="4 3" fill="none"/>
          <path d="M874.500 639V333q0-5 5-5H941q5.500 0 5.500 5V639" fill="none" stroke="#c8161c" stroke-width="5"/>
          <path d="M962 490.500H1092M1088 484.500h34" stroke="#8a8a8a" fill="none"/>
          <path d="M1088 484.500h8l-4 6z" stroke="#8a8a8a" fill="none"/>
          <text x="1092" y="484" class="grn">20.35</text>
          <g fill="#f4d020">
            <circle cx="878.500" cy="331" r="2"/><circle cx="942.500" cy="331" r="2"/>
            <circle cx="878" cy="404" r="2"/><circle cx="942" cy="404" r="2"/>
            <circle cx="878" cy="477" r="2"/><circle cx="942" cy="477" r="2"/>
          </g>
          <g fill="none" stroke="#f4d020"><circle cx="878.500" cy="331" r="3.500"/><circle cx="942.500" cy="331" r="3.500"/></g>
          <text transform="translate(957.500 573) rotate(90)" class="grs">350</text>
          <text transform="translate(885.500 630) rotate(90)" class="grs">35</text>
        </svg>
      </div>
      <div class="dbar3">
        <span class="tog2 it"><svg class="ic18"><use href="#ortho"/></svg>正交</span>
        <span class="tog2 it"><svg class="ic18"><use href="#dyn"/></svg>动态输入</span>
        <span class="snap">
          <span class="it"><svg class="ic18"><use href="#per"/></svg>垂点</span>
          <span class="it"><svg class="ic18"><use href="#mid"/></svg>中点</span>
        </span>
      </div>
    </div>
    <div class="dstatus">
      <span class="ds1">(X: 569 Y: 302)</span>
      <span class="ds2">选择钢筋进行编辑，选择标注进行修改或移动;</span>
      <svg class="grip" width="10" height="10" viewBox="0 0 10 10"><path d="M7 0h2v2H7zM4 4h2v2H4zM7 4h2v2H7zM0 8h2v2H0zM4 8h2v2H4zM7 8h2v2H7z" fill="#bbb"/></svg>
    </div>
  </div>
</div>
</body>
</html>
```
FILE: styles.css
```css
* { box-sizing: border-box; }
html, body { margin: 0; padding: 0; }
body {
  width: 1366px; height: 768px; overflow: hidden; position: relative;
  font-family: "Noto Sans", "Noto Sans CJK SC", sans-serif;
  font-size: 12px; line-height: 16px; color: #222; background: #f0f0f0;
}
.sprite { display: block; width: 0; height: 0; }
i, em, b { font-style: normal; font-weight: normal; }
svg { flex: none; display: block; }
.ic12 { width: 12px; height: 12px; }
.ic16 { width: 16px; height: 16px; }
.ic18 { width: 18px; height: 18px; }
.ic20 { width: 20px; height: 18px; }
.h18 { height: 18px; }
.it { display: inline-flex; align-items: center; gap: 3px; white-space: nowrap; }
.off { color: #888; }
.sep { display: block; width: 1px; height: 20px; background: #c8c8c8; flex: none; }
.sepa { margin-right: -4px; }
.sepb { margin-left: -4px; }
.sep5 { margin-right: -5px; }
.caret { display: block; width: 0; height: 0; border: 3px solid transparent; border-top: 3px solid #333; border-bottom: 0; margin: 1px 0 0 -1px; flex: none; }
.off .caret { border-top-color: #777; }
.c-wide { margin-left: 4px; }
.c-mid { margin-left: 2px; }
.more { font-size: 12px; color: #222; font-weight: bold; }
.pushr { margin-left: auto; }
.lat { font-family: "Liberation Mono", monospace; font-size: 11px; letter-spacing: -.6px; }

.app { display: flex; flex-direction: column; height: 768px; }

/* title */
.titlebar { height: 23px; background: #fff; display: flex; align-items: center; padding-left: 4px; gap: 2px; flex: none; }
.title { color: #777; font-size: 12.55px; white-space: nowrap; width: 680px; overflow: hidden; }
.winctl { margin-left: auto; display: flex; gap: 31px; padding-right: 19px; }

/* menu */
.menubar { height: 29px; background: #f4f4f4; display: flex; align-items: center; padding-left: 8px; gap: 11px; flex: none; white-space: nowrap; }
.xiaoit { gap: 6px; margin-left: -4px; }
.cadbox { width: 189px; height: 27px; align-self: flex-end; background: #fafafa; color: #0e6c7c; text-align: center; line-height: 27px; border-radius: 3px 3px 0 0; font-size: 11.6px; margin-left: -8px; }
.user { margin-left: -8px; }
.phone { letter-spacing: .3px; }
.bean { margin-left: -7px; }
.bellic { width: 14px; height: 18px; margin-left: 6px; }
.menubar .more { margin-left: auto; padding-right: 2px; }

/* toolbar */
.toolbar { height: 32px; background: #f2f2f2; display: flex; padding: 3px 0; gap: 3px; flex: none; }
.band { background: linear-gradient(#fbfbfb, #f3f3f3); height: 26px; display: flex; align-items: center; border-radius: 3px; }
.b1 { width: 148px; padding: 0 1px 0 5px; gap: 5px; margin-left: 2px; flex: none; }
.savemar { margin-left: 3px; }
.undoit { margin-left: 3px; }
.b2 { width: 546px; padding: 0 2px 0 5px; gap: 8px; flex: none; }
.sigma { display: block; width: 12px; margin: 0 6px 0 -3px; text-align: center; font: bold 14px/16px "Liberation Serif", serif; color: #222; }
.b3 { flex: 1; padding: 0 2px 0 8px; gap: 8px; margin-left: -2px; min-width: 0; }
.cubeit { margin-left: -6px; }
.dark { color: #222; }
.twod { width: 62px; height: 22px; border: 1px solid #777; padding-left: 2px; margin-left: -4px; }
.twod .caret { margin-left: 5px; }
.swatch { display: block; width: 15px; height: 13px; background: #e6e6e6; border: 1px solid #ccc; }

/* workspace */
.workspace { height: 624px; display: flex; flex: none; }
.nav { width: 166px; display: flex; flex-direction: column; background: #f0f0f0; flex: none; padding-bottom: 2px; }
.navhead { height: 17px; display: flex; align-items: center; justify-content: space-between; border: 1px solid #a8a8a8; padding: 0 4px 0 0; font-size: 12px; background: #f4f4f4; }
.navbtns { display: flex; gap: 9px; align-items: center; }
.navbtn { height: 22px; line-height: 21px; text-align: center; background: #efefef; border: 1px solid #aaa; border-top: 0; border-left: 1px solid #e8e8e8; font-size: 12px; color: #222; }
.gapt { height: 23px; line-height: 22px; border-top: 1px solid #aaa; }
.treebar { height: 24px; margin: 1px 1px 0 2px; background: linear-gradient(#fff, #efefef); display: flex; align-items: center; padding: 2px 0 0 5px; gap: 5px; }
.ntree { flex: 1; border: 2px solid #a0a0a0; border-top-width: 1px; margin-left: 2px; margin-right: 1px; background: #fff; padding-top: 4px; overflow: hidden; }
.nr { height: 16px; display: flex; align-items: center; padding-left: 5px; white-space: nowrap; }
.chev { width: 10px; height: 10px; }
.dot { display: block; width: 7px; border-top: 1px dotted #777; }
.fold { width: 16px; height: 14px; margin-right: 5px; }
.kids { margin-left: 11px; border-left: 1px dotted #777; padding-left: 18px; }
.kids.nov { border-left-color: transparent; }
.kidsin { border-left: 1px dotted #777; position: relative; }
.kidsin::after { content: ""; position: absolute; left: -1px; bottom: 0; width: 1px; height: 7px; background: #fff; }
.cr { height: 16px; display: flex; align-items: center; white-space: nowrap; }
.dot2 { display: block; width: 11px; border-top: 1px dotted #777; flex: none; }
.dot2.short { width: 8px; }
.cr > svg, .selwrap > svg { margin-right: 4px; }
.selwrap { display: flex; align-items: center; background: #d4d4d4; padding-left: 3px; height: 16px; width: 89px; margin-right: 1px; flex: none; }
.tag { display: flex; gap: 2px; width: 15px; height: 14px; border: 1px solid #2a7ad0; background: #e6f2ff; padding: 1px 2px; justify-content: center; flex: none; }
.tag i { display: block; width: 4px; background: #5aa0e6; }
.ne { font-size: 8px; line-height: 8px; background: #ffe000; font-weight: bold; color: #222; align-self: flex-start; margin-top: 0; width: 14px; flex: none; }

.rest { flex: 1; display: flex; flex-direction: column; min-width: 0; }
.toolbar2 { height: 26px; margin-left: 5px; background: #fafafa; display: flex; align-items: center; padding-left: 4px; gap: 7px; white-space: nowrap; flex: none; }
.tight { gap: 1px; }
.wide { gap: 5px; }
.firstit .caret { margin-left: -3px; }
.cpb { margin-left: 2px; }
.dnit { margin-left: 6px; }
.floorcb { width: 58px; height: 22px; background: #fff; display: flex; align-items: center; justify-content: space-between; padding: 0 3px 0 1px; }
.lower { flex: 1; display: flex; min-height: 0; margin-top: 2px; }

.comp { width: 194px; padding: 0 6px 3px 6px; display: flex; flex-direction: column; flex: none; }
.searchrow { height: 28px; padding-top: 5px; display: flex; gap: 3px; flex: none; }
.searchrow > svg { margin: 4px 0 0 4px; }
.searchbox { width: 156px; height: 23px; border: 1px solid #8a8a8a; background: #fff; color: #888; padding: 3px 2px; }
.clist { flex: 1; display: flex; border: 2px solid #a4a4a4; border-top-width: 1px; background: #fff; width: 182px; margin-left: -1px; min-height: 0; }
.rows { flex: 1; padding-top: 4px; position: relative; }
.zr { height: 16px; display: flex; align-items: center; padding-left: 30px; }
.dot3 { display: block; width: 12px; height: 16px; margin-top: -16px; border-bottom: 1px dotted #777; border-left: 1px dotted #777; flex: none; transform: translateY(-1px); }
.zr:first-child .dot3 { height: 24px; margin-top: -16px; }
.dot3.short { width: 9px; }
.zr > .ic12 { margin: 0 8px 0 0; }
.zt { font-family: "Liberation Mono", monospace; font-size: 11px; letter-spacing: -.6px; white-space: nowrap; }
.curbox { display: flex; align-items: center; background: #2f68c0; width: 74px; height: 16px; padding-left: 3px; color: #111; }
.curbox .ic12 { margin-right: 8px; }
.sbar { width: 16px; margin-right: 1px; background: #f0f0f0; display: flex; flex-direction: column; align-items: center; padding-top: 7px; }
.sarrow { width: 10px; height: 10px; flex: none; }
.sthumb { width: 16px; height: 133px; background: #c8c8c8; margin-top: auto; margin-bottom: 3px; }
.sbar .sarrow:last-child { margin-bottom: 4px; }

.propwrap { flex: 1; min-width: 0; display: flex; flex-direction: column; }
.tabs { height: 21px; background: #fff; margin-right: 4px; border-bottom: 1px solid #ccc; flex: none; padding-left: 2px; }
.tab { display: block; width: 60px; height: 21px; background: #fff; border: 1px solid #ddd; border-bottom: 0; line-height: 19px; text-align: center; color: #222; }
.proppanel { flex: 1; display: flex; margin: 4px 4px 5px 2px; border: 1px solid #bbb; background: #fff; min-height: 0; }
.pgrid { flex: 1; display: grid; grid-template-columns: 22px 191px 1fr; grid-auto-rows: 19px; grid-template-rows: 23px; align-content: start; }
.pgrid > div { border-right: 1px solid #b8b8b8; border-bottom: 1px solid #b8b8b8; white-space: nowrap; line-height: 20px; }
.h { background: linear-gradient(#fff, #e8e8e8); text-align: center; line-height: 22px !important; }
.corner { background: #f0f0f0; }
.hv { background: linear-gradient(#fce4b4, #f2bf66); color: #800080; text-align: left; padding-left: 43px; font-size: 12px; }
.n { background: linear-gradient(#f8f8f8, #ededed); text-align: center; }
.nm { padding-left: 20px; }
.v { padding-left: 2px; }
.mono { font-family: "Liberation Mono", monospace; font-size: 11px; letter-spacing: -.6px; }
.blue { color: #0000f0; }
.gray { color: #8a8a8a; }
.nsel { background: #fcd898; color: #800040; }
.msel { background: #0078d7; color: #fff; }
.vsel { background: #d8e9f7; }
.grp { padding-left: 2px; display: flex; align-items: center; gap: 5px; }
.pm { display: block; width: 13px; height: 13px; border: 1px solid #aaa; background: linear-gradient(#333, #333) center/7px 1px no-repeat, linear-gradient(#333, #333) center/1px 7px no-repeat, #fff; }
.psbar { width: 14px; margin-right: 2px; background: #f0f0f0; border-left: 1px solid #ddd; display: flex; flex-direction: column; align-items: center; padding-top: 5px; }
.pthumb { width: 13px; height: 385px; background: #cbcbcb; margin: 4px 0 auto; }
.psbar .sarrow:last-child { margin-bottom: 5px; }

/* status */
.status { height: 21px; display: flex; gap: 2px; background: #f0f0f0; padding-top: 1px; flex: none; white-space: nowrap; }
.status > span { display: block; background: #f6f6f6; border: 1px solid #e0e0e0; line-height: 18px; padding-left: 1px; }
.status em { font-family: "Liberation Mono", monospace; font-size: 11px; letter-spacing: -.6px; }
.s0 { width: 148px; }
.s1 { width: 78px; }
.s2 { width: 98px; }
.s3 { width: 48px; padding-left: 2px !important; }
.s4 { width: 914px; }
.s5 { width: 66px; padding-left: 3px !important; }

/* taskbar */
.taskbar { flex: 1; background: #050a10; display: flex; align-items: stretch; color: #ddd; }
.start { width: 48px; background: #000; display: flex; align-items: center; justify-content: center; }
.search { width: 344px; background: #333; display: flex; align-items: center; padding-left: 10px; color: #999; font-size: 13px; }
.cortana { display: block; width: 21px; height: 21px; border: 3px solid #d8d8d8; border-radius: 50%; margin-right: 5px; }
.mic { margin-left: auto; margin-right: 14px; }
.slot { width: 50px; display: flex; align-items: center; justify-content: center; border-bottom: 2px solid transparent; }
.shift5 svg { margin-left: 8px; }
.slot.under { border-bottom-color: #6ab2f0; margin: 0 3px 0 -3px; }
.slot.under2 { border-bottom-color: #6ab2f0; }
.slot.active { background: #2e3338; border-bottom-color: #6ab2f0; }
.tray { display: flex; align-items: center; margin-left: 57px; white-space: nowrap; }
.t-link { width: 24px; }
.t-cpu { width: 86px; display: flex; flex-direction: column; align-items: center; line-height: 17px; }
.t-cpu b, .t-clock b { display: block; }
.t-a { display: flex; align-items: center; justify-content: center; height: 100%; }
.w16 { width: 16px; } .w24 { width: 24px; } .w26 { width: 26px; } .w28 { width: 28px; }
.zh { font-size: 14px; color: #fff; }
.t-clock { width: 60px; display: flex; flex-direction: column; align-items: center; line-height: 18px; }
.notif { width: 34px; margin-left: 20px; }
.sg { display: flex; align-items: center; justify-content: center; width: 27px; height: 27px; background: #ee5a24; color: #fff; font: bold 24px/27px "Liberation Sans", sans-serif; border-radius: 6px; transform: rotate(-8deg); flex: none; }
.sg.small { width: 16px; height: 18px; font-size: 16px; line-height: 18px; border-radius: 3px; }

/* overlays */
.sogou { position: absolute; left: 700px; top: 0; display: flex; align-items: flex-start; }
.sogou > .sg { margin-top: 1px; z-index: 1; }
.sgbar { width: 184px; height: 24px; margin: 3px 0 0 -5px; background: #fff; border: 1px solid #b8d0e8; display: flex; align-items: center; gap: 7px; padding-left: 11px; }
.sgzh { color: #2f7dd0; font-size: 15px; font-weight: bold; width: 15px; }
.sgp { color: #2f7dd0; font-size: 13px; font-weight: bold; width: 11px; }
.badge { position: absolute; left: 1092px; top: -28px; width: 46px; height: 46px; border-radius: 50%; background: #35b44a; color: #fff; border: 2px solid #d8e8d8; box-shadow: 0 2px 4px rgba(0,0,0,.5); display: flex; align-items: flex-end; justify-content: center; font-size: 12px; font-weight: bold; line-height: 12px; padding-bottom: 3px; }

.dialog { position: absolute; left: 672px; top: 133px; width: 672px; height: 570px; border: 1px solid #333; border-bottom-width: 2px; background: linear-gradient(#98b4d2 0, #bcd3ea 28px, #bcd3ea); display: flex; flex-direction: column; box-shadow: inset -1px 0 0 #3cb8e8; }
.dtitle { height: 29px; padding: 10px 0 0 7px; flex: none; line-height: 16px; color: #222; }
.dbody { margin: 0 7px 7px 7px; background: #f0f0f0; flex: 1; display: flex; flex-direction: column; min-height: 0; }
.dtabs { height: 20px; display: flex; align-items: flex-end; padding-left: 2px; flex: none; border-bottom: 1px solid #d0d0d0; }
.dt { display: block; text-align: center; height: 20px; line-height: 21px; }
.off2 { width: 41px; height: 19px; background: #f0f0f0; border: 1px solid #d0d0d0; border-bottom: 0; }
.dt.on { width: 44px; height: 21px; background: #fff; border: 1px solid #ddd; border-bottom: 0; margin-bottom: -1px; line-height: 20px; }
.dpanel { margin-left: 2px; margin-right: 3px; height: 486px; border: 1px solid #d8d8d8; border-top: 3px solid #fff; border-left: 3px solid #fff; background: #f0f0f0; flex: none; }
.dbar1, .dbar2 { background: linear-gradient(#fbfbfb, #f4f4f4); display: flex; align-items: center; white-space: nowrap; }
.dbar1 { height: 26px; margin-top: 2px; margin-right: 2px; padding: 1px 0 0 6px; gap: 3px; color: #222; }
.dbar2 { width: 162px; height: 24px; margin-top: 3px; padding: 1px 0 0 6px; gap: 2px; }
.dbar2 .sep { margin: 0 -1px 0 7px; }
.tog { display: inline-flex; align-items: center; height: 22px; padding: 0 4px; background: #dce9f5; border: 1px solid #0078d7; }
.dcb { width: 75px; height: 22px; background: #fff; display: flex; align-items: center; justify-content: space-between; padding: 0 3px 0 2px; margin-left: 2px; letter-spacing: .2px; }
.s-a { margin: 0 -2px 0 6px; }
.s-b { margin: 0 -1px 0 2px; }
.s-c { margin: 0 2px 0 4px; }
.selbtn { width: 50px; padding: 0 2px; }
.m3 { margin-left: 3px; }
.m6 { margin-left: 6px; }
.dis { color: #999; margin-left: 6px; }
.canvas { height: 396px; margin-top: 3px; margin-right: 1px; border: 2px solid #f00; background: #131720; overflow: hidden; }
.cad { display: block; width: 642px; height: 392px; }
.dimt { font: 11px "Liberation Sans", sans-serif; fill: #34383f; text-anchor: middle; }
.whitet { font: 11px "Liberation Sans", sans-serif; fill: #fff; text-anchor: middle; }
.grn { font: 12px "DejaVu Sans Mono", monospace; fill: #18e818; }
.grs { font: bold 7.5px "DejaVu Sans Mono", monospace; fill: #18e818; }
.dbar3 { display: flex; align-items: center; height: 24px; margin-top: 2px; white-space: nowrap; }
.tog2 { height: 24px; padding: 0 2px 0 3px; background: #dce9f5; border: 1px solid #0078d7; }
.snap { display: flex; align-items: center; gap: 5px; background: #fafafa; height: 24px; margin-left: 2px; padding: 0 5px 0 4px; }
.dstatus { height: 22px; margin-top: 4px; display: flex; gap: 3px; flex: none; position: relative; }
.ds1 { width: 95px; background: linear-gradient(#fafafa, #efefef); border: 1px solid #ddd; padding: 2px 0 0 3px; color: #234; font-size: 11px; white-space: nowrap; }
.ds2 { flex: 1; background: linear-gradient(#fafafa, #efefef); border: 1px solid #ddd; padding-left: 3px; line-height: 20px; }
.grip { position: absolute; right: 2px; bottom: 2px; }
```
